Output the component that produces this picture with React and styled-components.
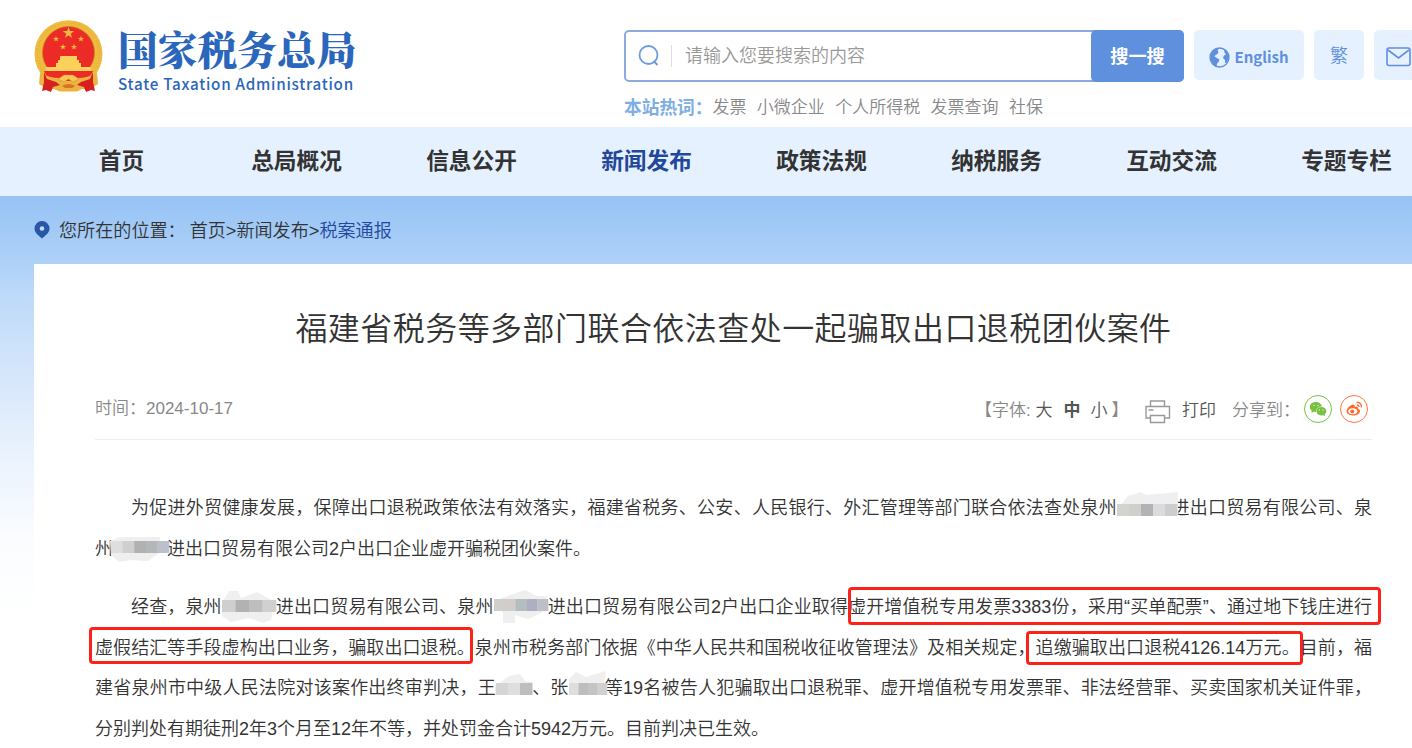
import React from 'react';
import styled, { createGlobalStyle } from 'styled-components';

const GlobalStyle = createGlobalStyle`
  * {
    box-sizing: border-box;
  }
  body {
    margin: 0;
    background: #fff;
    color: #333;
    font-family: "Liberation Sans", "Noto Sans CJK SC", sans-serif;
    font-weight: 350;
    overflow: hidden;
  }
`;

const Page = styled.div`
  width: 100%;
  height: 748px;
  overflow: hidden;
`;

const Header = styled.header`
  display: flex;
  height: 127px;
  padding-left: 34px;
`;

const Logo = styled.div`
  display: flex;
  flex: none;
  width: 590px;
  padding-top: 18px;
`;

const LogoText = styled.div`
  margin-left: 14px;
  color: #2a66bb;
  white-space: nowrap;
`;

const LogoName = styled.div`
  margin-top: 5px;
  height: 50px;
  font: 900 39.7px/50px "Noto Serif CJK SC", "Noto Sans CJK SC", serif;
`;

const LogoEnglish = styled.div`
  font: 500 15.2px/20px "Noto Sans CJK SC", sans-serif;
  letter-spacing: 0.74px;
`;

const SearchArea = styled.div`
  flex: none;
  width: 560px;
  padding-top: 30px;
`;

const SearchBox = styled.div`
  display: flex;
  align-items: center;
  height: 52px;
  border: 2px solid #8caadb;
  border-radius: 5px;
  padding-left: 12px;
`;

const Placeholder = styled.div`
  flex: 1;
  height: 22px;
  margin-left: 11px;
  padding-left: 13px;
  border-left: 1px solid #ddd;
  color: #999;
  font-size: 18px;
  line-height: 22px;
`;

const SearchButton = styled.div`
  width: 93px;
  height: 52px;
  margin-right: -2px;
  border-radius: 5px;
  background: #5f90dd;
  color: #fff;
  font-weight: 700;
  font-size: 18.2px;
  line-height: 54px;
  text-align: center;
`;

const HotWords = styled.div`
  display: flex;
  gap: 10.4px;
  margin-top: 13px;
  color: #888;
  font-size: 17px;
  line-height: 26px;
  white-space: nowrap;
`;

const HotLabel = styled.span`
  width: 78px;
  color: #7eaee2;
  font-weight: 700;
  font-size: 17.7px;
`;

const HeaderButton = styled.div`
  display: flex;
  flex: none;
  align-items: center;
  justify-content: center;
  width: ${props => props.$width}px;
  height: 50px;
  margin: 30px 0 0 10px;
  padding: ${props => props.$drop || 0}px 0 ${props => props.$lift || 0}px;
  border-radius: 5px;
  background: #e5f1ff;
  color: #5f90dd;
  font-size: 18px;
`;

const EnglishLabel = styled.span`
  margin-left: 4px;
  font: 700 15px/20px "Noto Sans CJK SC", sans-serif;
`;

const Nav = styled.nav`
  display: flex;
  height: 69px;
  padding-left: 34px;
  background: #e5f1ff;
`;

const NavItem = styled.div`
  flex: none;
  width: 175px;
  color: ${props => (props.$active ? '#23479b' : '#333')};
  font-weight: 700;
  font-size: 22.7px;
  line-height: 68px;
  text-align: center;
`;

const Body = styled.main`
  height: 552px;
  padding-left: 34px;
  background: linear-gradient(#96c3f5 0, #afd1f8 68px, #bddaf9 100px, #d0e3fb 160px, #e4effc 235px, #f0f6fe 290px, #fafcff 340px, #fdfeff 390px, #fff 440px);
`;

const Breadcrumb = styled.div`
  display: flex;
  align-items: center;
  height: 68px;
  font-size: 18.1px;
  white-space: nowrap;
`;

const Crumbs = styled.span`
  margin: 0 0 3px ${props => props.$left}px;

  b {
    color: #23479b;
    font-weight: 350;
  }
`;

const Article = styled.article`
  height: 484px;
  padding: 0 40px 0 61px;
  background: #fff;
`;

const Title = styled.h1`
  margin: 0;
  padding-top: 41px;
  font-weight: 350;
  font-size: 32px;
  line-height: 48px;
  letter-spacing: 0.45px;
  text-align: center;
`;

const Meta = styled.div`
  display: flex;
  align-items: center;
  height: 63px;
  margin-top: 24px;
  padding: 2px 4px 0 0;
  border-bottom: 1px solid #eee;
  color: #888;
  font-size: 17px;
  line-height: 26px;
  white-space: nowrap;

  svg {
    flex: none;
  }
`;

const PublishTime = styled.span`
  flex: 1;
`;

const FontSizes = styled.span`
  display: flex;
  width: 170px;
  margin-top: 3px;
`;

const SizeOption = styled.span`
  margin-right: ${props => props.$gap}px;
  color: #555;
  font-weight: ${props => (props.$active ? 700 : 350)};
`;

const PrinterSlot = styled.span`
  display: flex;
  margin-top: 5px;
`;

const PrintLabel = styled.span`
  width: 50px;
  margin: 3px 0 0 11px;
  color: #555;
`;

const ShareLabel = styled.span`
  width: 72px;
  margin-top: 3px;
`;

const ShareIcon = styled.span`
  display: flex;
  align-items: center;
  justify-content: center;
  width: 28px;
  height: 28px;
  margin-left: ${props => props.$gap || 0}px;
  border: 1px solid ${props => props.$color};
  border-radius: 50%;
`;

const Paragraph = styled.div`
  margin-top: ${props => props.$top}px;
  font-size: 18px;
  line-height: 40.5px;
`;

const Line = styled.div`
  height: 40.5px;
  padding-left: ${props => (props.$indent ? 36 : 0)}px;
  text-align: justify;
  text-align-last: ${props => (props.$last ? 'left' : 'justify')};
  white-space: nowrap;
`;

// red frame drawn over a phrase, edges given relative to the text
const Marked = styled.span`
  position: relative;

  &::after {
    content: "";
    position: absolute;
    top: ${props => props.$top}px;
    bottom: ${props => props.$bottom}px;
    left: ${props => props.$left}px;
    right: ${props => props.$right}px;
    border: 3px solid #fb2318;
    border-radius: 4px;
  }
`;

const HiddenName = styled.span`
  position: relative;
  display: inline-block;
  width: ${props => props.$width}px;
  height: 18px;
  vertical-align: -3px;

  svg {
    position: absolute;
    top: -8px;
    left: ${props => props.$left || -1}px;
    z-index: 1;
  }
`;

const navItems = ['首页', '总局概况', '信息公开', '新闻发布', '政策法规', '纳税服务', '互动交流', '专题专栏'];
const hotWords = ['发票', '小微企业', '个人所得税', '发票查询', '社保'];

const star = 'M0-5 1.2-1.6 4.8-1.6 1.9.6 3 4 0 2-3 4-1.9.6-4.8-1.6-1.2-1.6Z';

function Emblem() {
  return (
    <svg width="70" height="76" viewBox="0 0 70 76">
      <ellipse cx="34.5" cy="36" rx="34" ry="33.8" fill="#eebb40" />
      <ellipse cx="34.5" cy="36" rx="31" ry="31" fill="none" stroke="#e2a732" strokeWidth="1.2" strokeDasharray="1 2" />
      <circle cx="34.5" cy="34.5" r="26" fill="#ec2a26" stroke="#c9821e" strokeWidth=".8" />
      <path d={star} transform="translate(34.5 15) scale(1.2)" fill="#edb83e" />
      <path d={star} transform="translate(22 21) scale(.65)" fill="#edb83e" />
      <path d={star} transform="translate(47 21) scale(.65)" fill="#edb83e" />
      <path d={star} transform="translate(29 29) scale(.65)" fill="#edb83e" />
      <path d={star} transform="translate(40 29) scale(.65)" fill="#edb83e" />
      <path d="M26 38h17v4h2v3h-21v-3h2zM22 45h25v4h10v4H12v-4h10z" fill="#fad15a" />
      <path d="M10 53h49l-4 8-15 2H29l-15-2z" fill="#ec2a26" />
      <path d="M6 55Q16 60 25 60L34 64 44 60Q53 60 63 55L64 66 56 71 48 71 43 73.500H26L20 71 13 71 5 66Z" fill="#ebb441" />
      <path d="M24 61 30 57H39L45 61 39 64 34.500 61 30 64Z" fill="#f8ca55" stroke="#d8912a" strokeWidth=".6" />
      <path d="M10 54 13 61 22 64 26 67 19 69 17 74 12 72 8 73 10 64Z M59 54 56 61 47 64 43 67 50 69 52 74 57 72 61 73 59 64Z" fill="#d71f20" />
      <path d="M28 68Q34.500 64 41 68L38 70H31Z" fill="#d8731f" />
    </svg>
  );
}

function Smudge({ shape, tones, width = 58, top = 13 }) {
  const step = (width - 2) / tones.length;
  return (
    <svg width={width} height="40" viewBox={`0 0 ${width} 40`}>
      <path d={shape} fill="#efefef" />
      {tones.map((tone, i) => (
        <rect key={i} x={1 + i * step} y={top} width={step + 0.3} height="12" fill={tone} />
      ))}
    </svg>
  );
}

function SearchIcon() {
  return (
    <svg width="22" height="24" viewBox="0 0 22 24" fill="none" stroke="#6b9be0" strokeWidth="1.8">
      <circle cx="10.500" cy="11" r="9" />
      <path d="m15.500 17 4 4" />
    </svg>
  );
}

function GlobeIcon() {
  return (
    <svg width="21" height="21" viewBox="0 0 21 21">
      <circle cx="10.500" cy="10.500" r="9.500" fill="none" stroke="#5f90dd" strokeWidth="1.300" />
      <path d="M3 4.500 7 1.500 10.500 1 8.500 3.500 9.500 5 8.500 7 6.500 8 5.500 9.500 8 11 10.500 12.500 9.500 15 8 16.500 7.500 20 3.500 17 1 11ZM15 2.500 18 5 20 10.500 18 15.500 16 16 16 13 14 11 15 8.500 17 7.500 15.500 5.500Z" fill="#5f90dd" />
    </svg>
  );
}

function MailIcon() {
  return (
    <svg width="26" height="20" viewBox="0 0 26 20" fill="none" stroke="#5f90dd" strokeWidth="1.600">
      <rect x="1" y="1" width="23" height="17.500" rx="2" />
      <path d="m2 3 10.500 8L23 3" />
    </svg>
  );
}

function PrinterIcon() {
  return (
    <svg width="26" height="24" viewBox="0 0 26 24" fill="none" stroke="#999" strokeWidth="1.400">
      <path d="M5.500 6.500V1h14v5.500M5.500 18H1V6.500h23.500V18h-5M5.500 15.500h14v7h-14zM3.500 10h5" />
    </svg>
  );
}

export default function App() {
  return (
    <Page>
      <GlobalStyle />
      <Header>
        <Logo>
          <Emblem />
          <LogoText>
            <LogoName>国家税务总局</LogoName>
            <LogoEnglish>State Taxation Administration</LogoEnglish>
          </LogoText>
        </Logo>
        <SearchArea>
          <SearchBox>
            <SearchIcon />
            <Placeholder>请输入您要搜索的内容</Placeholder>
            <SearchButton>搜一搜</SearchButton>
          </SearchBox>
          <HotWords>
            <HotLabel>本站热词：</HotLabel>
            {hotWords.map(word => <span key={word}>{word}</span>)}
          </HotWords>
        </SearchArea>
        <HeaderButton $width={110} $drop={4}>
          <GlobeIcon />
          <EnglishLabel>English</EnglishLabel>
        </HeaderButton>
        <HeaderButton $width={50} $lift={3}>繁</HeaderButton>
        <HeaderButton $width={50} $drop={4}>
          <MailIcon />
        </HeaderButton>
      </Header>
      <Nav>
        {navItems.map(item => <NavItem key={item} $active={item === '新闻发布'}>{item}</NavItem>)}
      </Nav>
      <Body>
        <Breadcrumb>
          <svg width="16" height="18" viewBox="0 0 16 18">
            <path d="M8 0a7.400 7.400 0 0 1 7.500 7.400C15.500 12 11 14.500 8 17.500 5 14.500.5 12 .5 7.400A7.400 7.400 0 0 1 8 0Z" fill="#2957a8" />
            <circle cx="8" cy="7.500" r="2.300" fill="#c8dcf5" />
          </svg>
          <Crumbs $left={9}>您所在的位置：</Crumbs>
          <Crumbs $left={4}>首页&gt;新闻发布&gt;<b>税案通报</b></Crumbs>
        </Breadcrumb>
        <Article>
          <Title>福建省税务等多部门联合依法查处一起骗取出口退税团伙案件</Title>
          <Meta>
            <PublishTime>时间：2024-10-17</PublishTime>
            <FontSizes>
              <span>【字体:&nbsp;</span>
              <SizeOption $gap={11}>大</SizeOption>
              <SizeOption $gap={10} $active>中</SizeOption>
              <SizeOption $gap={4}>小</SizeOption>
              <span>】</span>
            </FontSizes>
            <PrinterSlot>
              <PrinterIcon />
            </PrinterSlot>
            <PrintLabel>打印</PrintLabel>
            <ShareLabel>分享到：</ShareLabel>
            <ShareIcon $color="#7ac143">
              <svg width="18" height="16" viewBox="0 0 18 16">
                <path d="M7 1C3 1 .8 3.300.8 6c0 1.600.8 2.800 2 3.700L2.300 12l2.400-1.200 2.300.3C7 7.500 9.500 5.600 13 5.600 12.500 2.800 10 1 7 1Z" fill="#7ac143" />
                <path d="M12.300 6.100C9.300 6.100 7.400 8 7.400 10.300s2 4.200 4.900 4.200l1.800-.2 2 1-.5-1.800c1-.7 1.700-1.800 1.700-3.200 0-2.300-2-4.200-5-4.200Z" fill="#7ac143" />
                <path d="M4.500 4.500h1M8.500 4.500h1M10 9h1M13.500 9h1" stroke="#fff" strokeWidth="1" />
              </svg>
            </ShareIcon>
            <ShareIcon $color="#ff763b" $gap={8}>
              <svg width="18" height="16" viewBox="0 0 18 16">
                <path d="M8 3.500C5 4 1.500 7.500 1.500 10.300c0 5.500 12.500 5.500 13.500.2.200-1.500-.6-2.300-2-2.700.5-1.500-.5-2.500-3-1.700C9.500 4.500 9.500 3.300 8 3.500Z" fill="#ff6a2c" />
                <ellipse cx="7.800" cy="10.300" rx="4.500" ry="3" fill="#fff" />
                <circle cx="7.300" cy="10.500" r="2" fill="#ff6a2c" />
                <path d="M11.500 1.500q5-.5 5 5M12 4q2 0 2 2" fill="none" stroke="#ff6a2c" strokeWidth="1.300" />
              </svg>
            </ShareIcon>
          </Meta>
          <Paragraph $top={48}>
            <Line $indent>
              为促进外贸健康发展，保障出口退税政策依法有效落实，福建省税务、公安、人民银行、外汇管理等部门联合依法查处泉州
              <HiddenName $width={54}>
                <Smudge width={62} shape="M1 19 12 5 25 1 30 4 62 1V25H7Z" tones={['#d4d3cf', '#cfcfcc', '#b3b3b5', '#dbdbde', '#cdcdd0']} />
              </HiddenName>
              进出口贸易有限公司、泉
            </Line>
            <Line $last>
              州
              <HiddenName $width={54} $left={-3}>
                <Smudge width={60} top={9} shape="M0 9 10 5H50V20L38 29 22 28 9 30 1 23Z" tones={['#dedede', '#cfd0ce', '#b1b1b1', '#b5b6b9', '#bcc0ca']} />
              </HiddenName>
              进出口贸易有限公司2户出口企业虚开骗税团伙案件。
            </Line>
          </Paragraph>
          <Paragraph $top={18}>
            <Line $indent>
              经查，泉州
              <HiddenName $width={54}>
                <Smudge width={56} top={10} shape="M1 13 8 1H17L20 8 36 2 54 12 50 30 42 33 28 28 10 32 1 26Z" tones={['#cfcfd2', '#b2b2b2', '#bebebe', '#d0d0d1']} />
              </HiddenName>
              进出口贸易有限公司、泉州
              <HiddenName $width={54}>
                <Smudge width={56} top={9} shape="M1 11 17 5 32 0 44 6 54 6 50 22 35 29 22 25V33H10V23Z" tones={['#d0cfcc', '#d2cdca', '#b4bdbf', '#acb0c0', '#bdc1c6']} />
              </HiddenName>
              进出口贸易有限公司2户出口企业取得
              <Marked $top={-10} $bottom={-8} $left={0} $right={-9}>虚开增值税专用发票3383份，采用“买单配票”、通过地下钱庄进行</Marked>
            </Line>
            <Line>
              <Marked $top={-11} $bottom={-6} $left={-6} $right={2}>虚假结汇等手段虚构出口业务，骗取出口退税。</Marked>
              泉州市税务部门依据《中华人民共和国税收征收管理法》及相关规定，
              <Marked $top={-7} $bottom={-7} $left={-10} $right={-3}>追缴骗取出口退税4126.14万元。</Marked>
              目前，福
            </Line>
            <Line>
              建省泉州市中级人民法院对该案作出终审判决，王
              <HiddenName $width={36}>
                <Smudge width={38} top={12} shape="M0 15 14 5 25 3 30 10 38 11V24H0Z" tones={['#d5d5d8', '#dedede', '#bebebe']} />
              </HiddenName>
              、张
              <HiddenName $width={36}>
                <Smudge width={40} top={12} shape="M1 8 8 1 18 6 38 0 36 12 28 24H1Z" tones={['#dededf', '#bdbec0', '#c4c4c4', '#d0d0d0']} />
              </HiddenName>
              等19名被告人犯骗取出口退税罪、虚开增值税专用发票罪、非法经营罪、买卖国家机关证件罪，
            </Line>
            <Line $last>分别判处有期徒刑2年3个月至12年不等，并处罚金合计5942万元。目前判决已生效。</Line>
          </Paragraph>
        </Article>
      </Body>
    </Page>
  );
}
